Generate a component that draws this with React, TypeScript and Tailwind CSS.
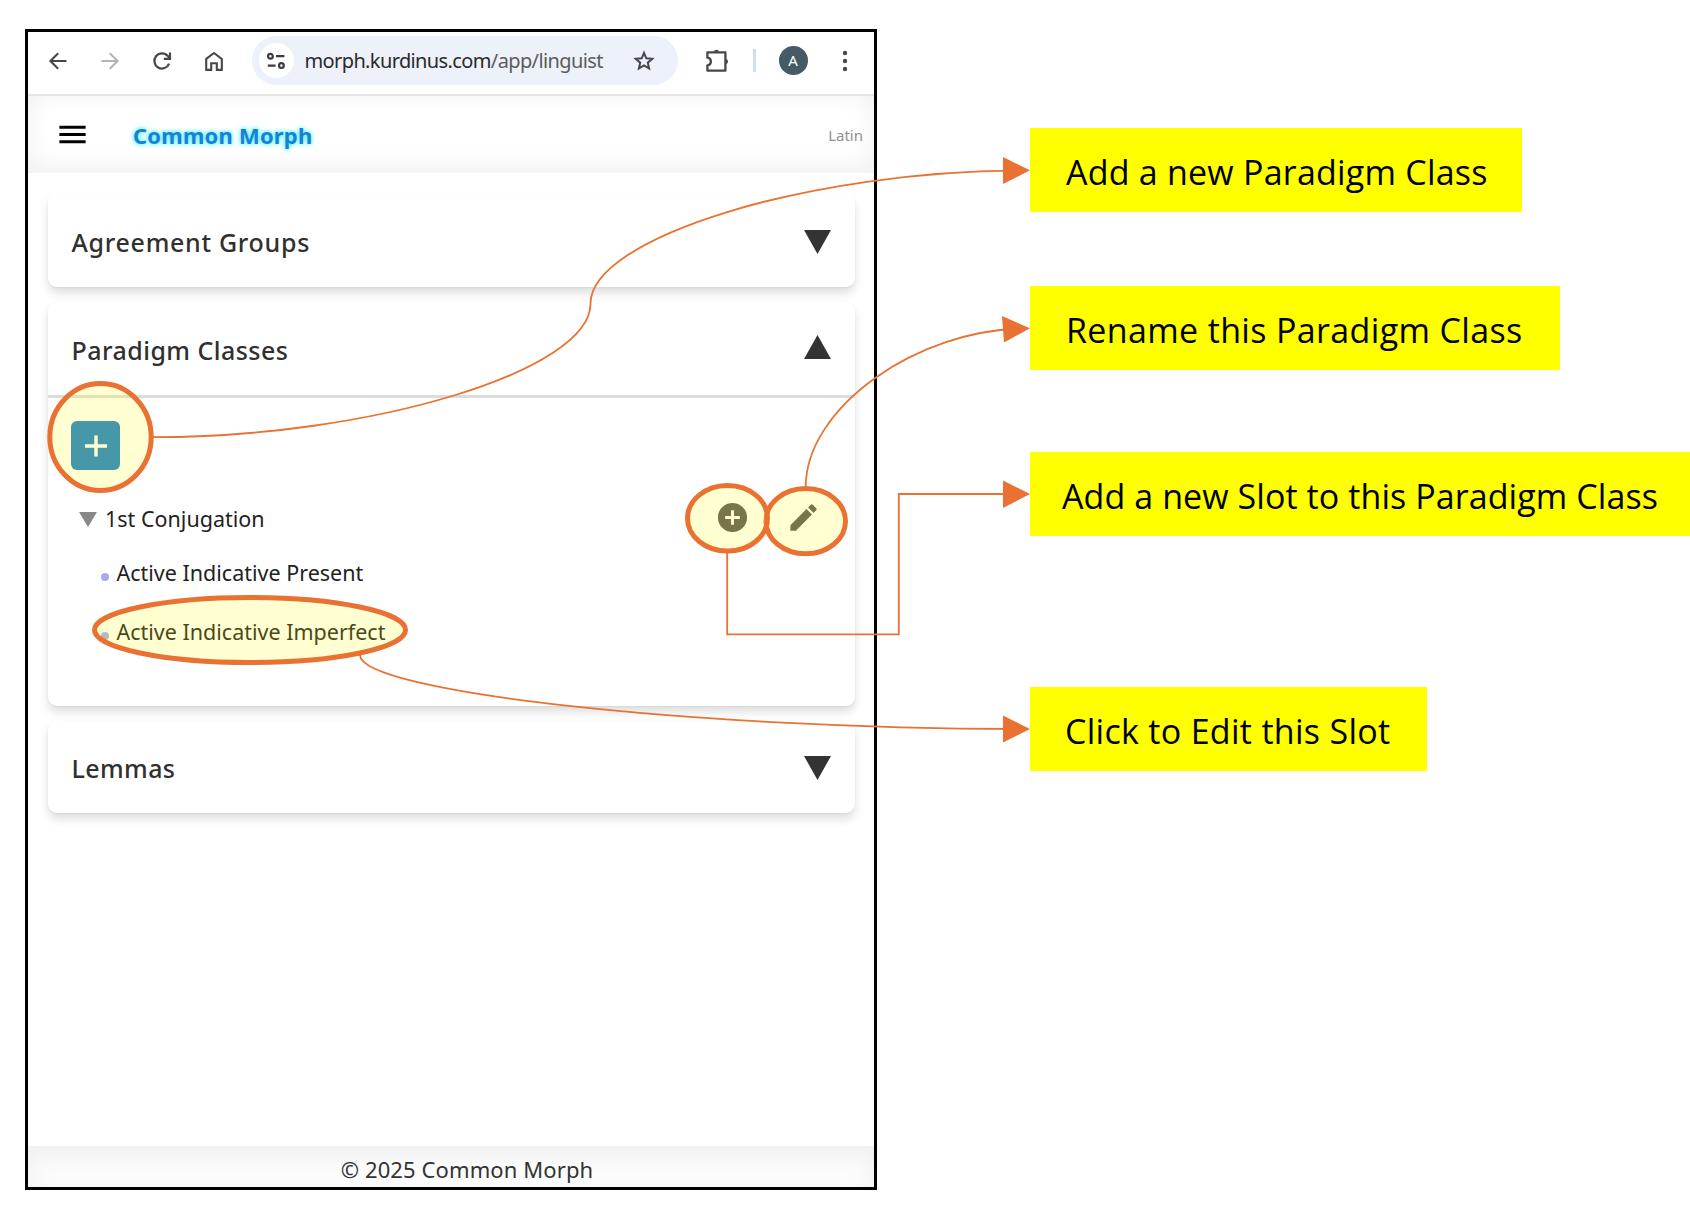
import { MdMenu, MdAddCircle, MdEdit } from "react-icons/md";

const ORANGE = "#e97132";

function BackIcon({ flip = false }: { flip?: boolean }) {
  return (
    <svg
      className={flip ? "h-5 w-5 -scale-x-100 text-[#b4b4b4]" : "h-5 w-5 text-[#474747]"}
      viewBox="0 0 20 20"
      fill="none"
      stroke="currentColor"
      strokeWidth="2.1"
    >
      <path d="M18.5 10H3M10.2 2.2 2.4 10l7.8 7.8" />
    </svg>
  );
}

function ReloadIcon() {
  return (
    <svg className="h-5 w-5 text-[#474747]" viewBox="0 0 20 20" fill="none" stroke="currentColor" strokeWidth="2.2">
      <path d="M17.1 12.6A7.6 7.6 0 1 1 15.8 5l1.6 1.9" />
      <path d="M18 1.6v6.2h-6.2" />
    </svg>
  );
}

function HomeIcon() {
  return (
    <svg className="h-5 w-5 text-[#474747]" viewBox="0 0 20 20" fill="none" stroke="currentColor" strokeWidth="2.1">
      <path d="M2.2 7.9 10 2l7.8 5.9v11h-5v-6.6H7.2v6.6h-5z" />
    </svg>
  );
}

function TuneIcon() {
  return (
    <svg className="h-5 w-5 text-[#3c3c3c]" viewBox="0 0 20 20" fill="none" stroke="currentColor" strokeWidth="2.2">
      <circle cx="4.4" cy="5.2" r="2.4" />
      <path d="M10 5.2h8.4M1.8 14.6h7.8" />
      <circle cx="15.4" cy="14.6" r="2.4" />
    </svg>
  );
}

function StarIcon() {
  return (
    <svg className="h-[22px] w-[22px] text-[#474747]" viewBox="0 0 22 22" fill="none" stroke="currentColor" strokeWidth="2">
      <path d="m11 2.8 2.3 5.5 6 .5-4.5 3.9 1.3 5.8-5.1-3.1-5.1 3.1 1.3-5.8-4.5-3.9 6-.5z" />
    </svg>
  );
}

function PuzzleIcon() {
  return (
    <svg className="h-6 w-6 text-[#474747]" viewBox="0 0 24 24" fill="none" stroke="currentColor" strokeWidth="2.3" strokeLinejoin="round">
      <path d="M2.4 3.3h18v18.4h-18v-5.2c4.6-.6 4.600-7.200 0-7.800z" />
      <path d="M8.600 2.800a2.900 2.900 0 0 1 5.600 0zM20.900 9.700a2.900 2.900 0 0 1 0 5.600z" fill="currentColor" stroke="none" />
    </svg>
  );
}

function Triangle({ up = false }: { up?: boolean }) {
  return (
    <svg className={up ? "mb-1 h-6 w-[27px] rotate-180" : "mt-[3px] h-6 w-[27px]"} viewBox="0 0 27 24">
      <path d="M0 0h27L13.5 24z" fill="#333333" />
    </svg>
  );
}

function BrowserBar() {
  return (
    <div className="flex h-[64px] shrink-0 items-center border-b-2 border-[#e5e5e5] pb-[5px] pl-5">
      <BackIcon />
      <div className="ml-8"><BackIcon flip /></div>
      <div className="ml-[31.5px]"><ReloadIcon /></div>
      <div className="ml-8"><HomeIcon /></div>
      <div className="ml-7 flex h-[49px] w-[426px] items-center rounded-full bg-[#ecf1fa] pl-[7px]">
        <div className="flex h-[35px] w-[35px] items-center justify-center rounded-full bg-white">
          <TuneIcon />
        </div>
        <div className="ml-[11px] w-[328px] whitespace-nowrap text-[20px] leading-7 tracking-[-0.62px] text-[#2a2a2a]">
          morph.kurdinus.com<span className="text-[#5c5c5c]">/app/linguist</span>
        </div>
        <StarIcon />
      </div>
      <div className="ml-[27px]"><PuzzleIcon /></div>
      <div className="ml-[24px] h-[23px] w-[3px] bg-[#cbdcfc]" />
      <div className="ml-[23px] flex h-[29px] w-[29px] items-center justify-center rounded-full bg-[#455a64] text-[15px] text-white">A</div>
      <svg className="ml-[32px] h-6 w-[10px]" viewBox="0 0 10 24" fill="#474747">
        <circle cx="5" cy="4" r="2.2" />
        <circle cx="5" cy="12" r="2.2" />
        <circle cx="5" cy="20" r="2.2" />
      </svg>
    </div>
  );
}

function AppHeader() {
  return (
    <header className="flex h-[77px] shrink-0 items-center bg-white pl-[27px] pr-[11px] shadow-[inset_0_-4px_26px_rgba(0,0,0,0.07)]">
      <MdMenu className="h-[35px] w-[35px] text-black" />
      <h1 className="ml-[43px] text-[22px] font-bold leading-8 tracking-[0.2px] text-[#1a7fd6] [text-shadow:0_0_4px_#5cf3ff,0_0_5px_#5cf3ff]">
        Common Morph
      </h1>
      <span className="ml-auto mt-px text-[15px] text-[#8f8f8f]">Latin</span>
    </header>
  );
}

const CARD = "rounded-[9px] bg-white shadow-[0_6px_10px_rgba(0,0,0,0.13),0_1px_2px_rgba(0,0,0,0.05)]";

function CardTitle({ text, size, open = false }: { text: string; size: string; open?: boolean }) {
  return (
    <div className={"flex items-center justify-between pl-[23.5px] pr-[24px] " + size}>
      <h2 className="mt-0.5 text-[25px] font-medium leading-8 text-[#303030]">{text}</h2>
      <Triangle up={open} />
    </div>
  );
}

function Slot({ text }: { text: string }) {
  return (
    <li className="flex h-[59px] items-center">
      <span className="mr-2 mt-[9px] h-[7.5px] w-[7.5px] rounded-full bg-[#a9a9f2]" />
      <span>{text}</span>
    </li>
  );
}

function Label({ text, box }: { text: string; box: string }) {
  return (
    <div className={"flex h-[84px] items-center whitespace-nowrap bg-[#ffff00] pt-[3px] font-['Open_Sans',sans-serif] text-[34px] leading-10 text-black " + box}>
      {text}
    </div>
  );
}

function Annotations() {
  return (
    <svg className="pointer-events-none absolute left-0 top-0 h-[1220px] w-[1690px]" viewBox="0 0 1690 1220" fill="none">
      <g stroke={ORANGE} strokeWidth="1.8">
        <path d="M153 437.2C372 437.2 590.5 370.5 590.5 303.8S810 170.3 1026 170.3" />
        <path d="M805.7 487C805.7 407.3 917.7 328.6 1026 328.6" />
        <path d="M727.2 553V634.3H898.8V494H1004" />
        <path d="M360 655C360 692 695 729 1026 729" />
      </g>
      <g fill={ORANGE}>
        <path d="M1030 170.3 1003 184V157z" />
        <path d="M1030 328.3 1004 342.5 1002 316z" />
        <path d="M1030 494 1003 508V480.5z" />
        <path d="M1030 729 1003 742.5V715.5z" />
      </g>
      <g stroke={ORANGE} strokeWidth="5" fill="#ffff00" fillOpacity="0.18">
        <ellipse cx="100.5" cy="437" rx="50.7" ry="53.5" />
        <ellipse cx="805.7" cy="521.2" rx="39.8" ry="32.6" />
        <ellipse cx="727.5" cy="518.3" rx="40" ry="32.8" />
        <ellipse cx="250" cy="630" rx="155.5" ry="32.5" />
      </g>
    </svg>
  );
}

export default function App() {
  return (
    <div className="relative flex h-[1220px] w-[1690px] overflow-hidden bg-white pl-[25px] pt-[29px] font-['Noto_Sans',sans-serif]">
      <main className="flex h-[1161px] w-[852px] shrink-0 flex-col border-[3px] border-black bg-white">
        <BrowserBar />
        <AppHeader />
        <div className="flex flex-1 flex-col gap-[15px] pl-5 pr-[19px] pt-[21px]">
          <section className={CARD}>
            <CardTitle text="Agreement Groups" size="h-[93px] tracking-[0.7px]" />
          </section>
          <section className={"h-[404px] " + CARD}>
            <CardTitle text="Paradigm Classes" size="h-[93px] tracking-[0.45px]" open />
            <div className="border-t-[3px] border-[#dcdcdc] px-[23px] pt-[23px] text-[21.5px] leading-8 text-[#222222]">
              <button className="flex h-[49px] w-[49px] items-center justify-center rounded-md bg-[#1e82ce]">
                <svg className="h-[22px] w-[22px]" viewBox="0 0 22 22" stroke="white" strokeWidth="3.4">
                  <path d="M11 .5v21M0 11h22" />
                </svg>
              </button>
              <div className="mt-[30px] flex h-9 items-center pl-2">
                <svg className="mt-0.5 h-[15px] w-[18px]" viewBox="0 0 18 15"><path d="M0 0h18L9 15z" fill="#888888" /></svg>
                <span className="ml-2 mt-0.5">1st Conjugation</span>
                <MdAddCircle className="mb-0.5 ml-auto h-[35px] w-[35px] text-[#585858]" />
                <MdEdit className="mb-0.5 ml-9 mr-[11px] h-[35px] w-[35px] text-[#585858]" />
              </div>
              <ul className="pl-[30px] pt-[7px]">
                <Slot text="Active Indicative Present" />
                <Slot text="Active Indicative Imperfect" />
              </ul>
            </div>
          </section>
          <section className={"h-[92px] " + CARD}>
            <CardTitle text="Lemmas" size="h-[91px] tracking-[0.4px]" />
          </section>
        </div>
        <footer className="flex h-[41px] shrink-0 items-center justify-center bg-[#fdfdfd] pl-8 pt-1 text-[22px] leading-8 tracking-[0.1px] text-[#333333] shadow-[inset_0_10px_26px_rgba(0,0,0,0.06)]">
          © 2025 Common Morph
        </footer>
      </main>
      <aside className="ml-[153px] flex shrink-0 flex-col items-start pt-[99px]">
        <Label text="Add a new Paradigm Class" box="w-[492px] pl-9 tracking-[0.22px]" />
        <Label text="Rename this Paradigm Class" box="mt-[74px] w-[530px] pl-[36px] tracking-[0.35px]" />
        <Label text="Add a new Slot to this Paradigm Class" box="mt-[82px] w-[660px] pl-8 tracking-[0.08px]" />
        <Label text="Click to Edit this Slot" box="mt-[151px] w-[397px] pl-[35px] tracking-[0.3px]" />
      </aside>
      <Annotations />
    </div>
  );
}
